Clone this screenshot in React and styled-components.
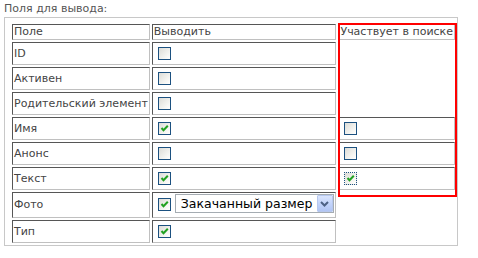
import { createGlobalStyle, styled } from "styled-components";

const GlobalStyle = createGlobalStyle`
  html, body {
    margin: 0;
    background: #fff;
  }
  body {
    font-family: "DejaVu Sans", Verdana, sans-serif;
    font-size: 11px;
    color: #444;
  }
`;

const Page = styled.div`
  position: relative;
  width: 478px;
  height: 258px;
`;

const Title = styled.div`
  padding: 2px 0 0 4px;
  height: 17px;
  line-height: 13px;
  color: #555;
  box-sizing: border-box;
`;

const Panel = styled.div`
  margin-left: 4px;
  width: 454px;
  border: 1px solid #c8c8c8;
  padding: 4px 0 0 5px;
  box-sizing: border-box;
`;

const Table = styled.table`
  border-collapse: separate;
  border-spacing: 2px;
  font-size: 11px;
  color: #444;
`;

const Cell = styled.td`
  padding: 1px;
  width: ${(p) => p.$w}px;
  box-sizing: border-box;
  vertical-align: middle;
  white-space: nowrap;
  line-height: 12px;
  border-style: solid;
  border-width: ${(p) => (p.$empty ? "0" : "1px")};
  border-color: #565656 #c0c0c0 #c0c0c0 #565656;
`;

const Controls = styled.div`
  display: flex;
  align-items: ${(p) => (p.$tall ? "flex-start" : "center")};
  height: ${(p) => (p.$tall ? 22 : 19)}px;
`;

const Box = styled.span`
  display: block;
  width: 13px;
  height: 13px;
  margin: ${(p) => (p.$tall ? "4px" : "3px")} 3px 3px 4px;
  box-sizing: border-box;
  border: 1px ${(p) => (p.$focus ? "dotted" : "solid")} #1c5180;
  background: linear-gradient(135deg, #dcdcd7 0%, #f6f6f3 70%, #fff 100%);
  svg {
    display: block;
  }
`;

const Select = styled.div`
  display: flex;
  align-items: center;
  width: 159px;
  height: 19px;
  margin: 0 0 0 1px;
  box-sizing: border-box;
  border: 1px solid #a5acb2;
  background: #fff;
  color: #000;
  font-size: 12.5px;
  line-height: 17px;
  padding-left: 5px;
  span {
    flex: 1;
    white-space: nowrap;
  }
`;

const Arrow = styled.span`
  flex: none !important;
  width: 16px;
  height: 17px;
  box-sizing: border-box;
  border: 1px solid #b7c8ef;
  border-radius: 1px;
  background: linear-gradient(180deg, #dbe5fd 0%, #c3d4fb 50%, #b1c5f4 100%);
  display: flex;
  align-items: center;
  justify-content: center;
`;

const Marker = styled.div`
  position: absolute;
  left: 338px;
  top: 23px;
  width: 119px;
  height: 174px;
  border: 2px solid #f00;
  box-sizing: border-box;
  pointer-events: none;
`;

function Check({ checked, focus, tall }) {
  return (
    <Box $focus={focus} $tall={tall}>
      {checked && (
        <svg width="11" height="11" viewBox="0 0 11 11">
          <path d="M2.5 5 L4.5 7.2 L8.8 2.8" fill="none" stroke="#21a121" strokeWidth="2" />
        </svg>
      )}
    </Box>
  );
}

const rows = [
  { name: "ID", show: false },
  { name: "Активен", show: false },
  { name: "Родительский элемент", show: false },
  { name: "Имя", show: true, search: false },
  { name: "Анонс", show: false, search: false },
  { name: "Текст", show: true, search: true, focus: true },
  { name: "Фото", show: true, select: "Закачанный размер", noSearch: true },
  { name: "Тип", show: true, noSearch: true },
];

export default function App() {
  return (
    <Page>
      <GlobalStyle />
      <Title>Поля для вывода:</Title>
      <Panel>
        <Table>
          <tbody>
            <tr>
              <Cell $w={136}>Поле</Cell>
              <Cell $w={188}>Выводить</Cell>
              <Cell $w={115}>Участвует в поиске</Cell>
            </tr>
            {rows.map((r) => (
              <tr key={r.name}>
                <Cell $w={136}>{r.name}</Cell>
                <Cell $w={188}>
                  <Controls $tall={!!r.select}>
                    <Check checked={r.show} tall={!!r.select} />
                    {r.select && (
                      <Select>
                        <span>{r.select}</span>
                        <Arrow>
                          <svg width="9" height="6" viewBox="0 0 9 6">
                            <path d="M1 1 L4.5 4.5 L8 1" fill="none" stroke="#4d6185" strokeWidth="2" />
                          </svg>
                        </Arrow>
                      </Select>
                    )}
                  </Controls>
                </Cell>
                {!r.noSearch &&
                  (r.search === undefined ? (
                    <Cell $w={115} $empty />
                  ) : (
                    <Cell $w={115}>
                      <Controls>
                        <Check checked={r.search} focus={r.focus} />
                      </Controls>
                    </Cell>
                  ))}
              </tr>
            ))}
          </tbody>
        </Table>
      </Panel>
      <Marker />
    </Page>
  );
}
